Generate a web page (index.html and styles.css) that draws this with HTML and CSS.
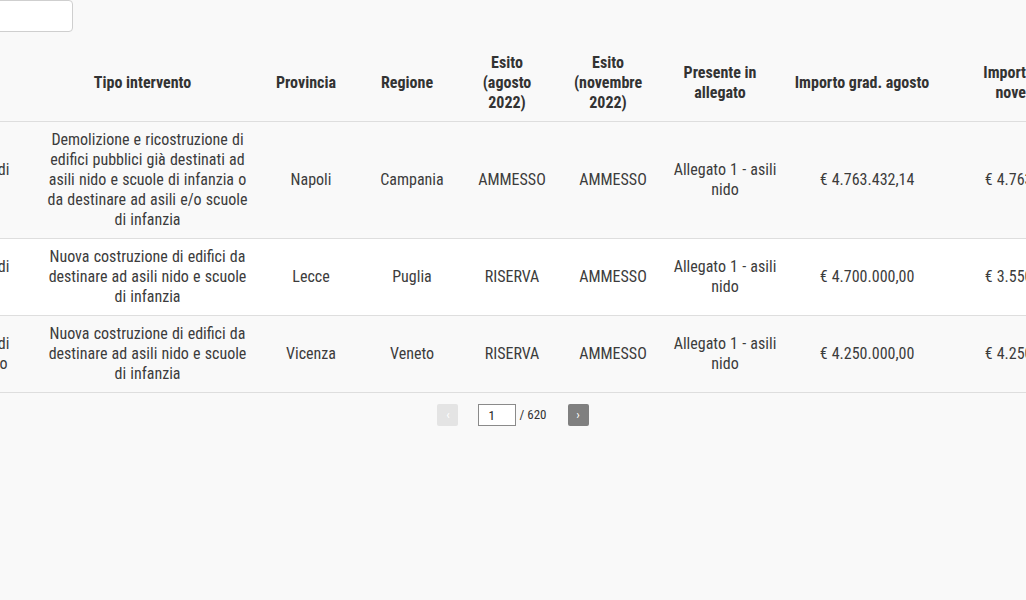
FILE: index.html
```html
<!DOCTYPE html>
<html>
<head>
  <meta charset="UTF-8">
  <link rel="stylesheet" href="styles.css">
  <title>Graduatoria asili nido</title>
</head>
<body>
<div class="scroller">
  <div class="inner">
    <div class="toolbar"><input class="search" type="text"></div>
    <table class="grid">
      <colgroup>
        <col class="c-ente">
        <col class="c-tipo">
        <col class="c-prov">
        <col class="c-reg">
        <col class="c-esito">
        <col class="c-esito2">
        <col class="c-alleg">
        <col class="c-imp">
        <col class="c-imp2">
        <col class="c-last">
      </colgroup>
      <thead>
        <tr>
          <th>Ente</th>
          <th>Tipo intervento</th>
          <th>Provincia</th>
          <th>Regione</th>
          <th>Esito (agosto 2022)</th>
          <th>Esito (novembre 2022)</th>
          <th>Presente in allegato</th>
          <th>Importo grad. agosto</th>
          <th>Importo grad. novembre</th>
          <th>Note</th>
        </tr>
      </thead>
      <tbody>
        <tr class="odd">
          <td>Comune di<br>Napoli</td>
          <td>Demolizione e ricostruzione di edifici pubblici già destinati ad asili nido e scuole di infanzia o da destinare ad asili e/o scuole di infanzia</td>
          <td>Napoli</td>
          <td>Campania</td>
          <td>AMMESSO</td>
          <td>AMMESSO</td>
          <td>Allegato 1 - asili nido</td>
          <td>€ 4.763.432,14</td>
          <td>€ 4.763.432,14</td>
          <td>-</td>
        </tr>
        <tr>
          <td>Comune di<br>Lecce</td>
          <td>Nuova costruzione di edifici da destinare ad asili nido e scuole di infanzia</td>
          <td>Lecce</td>
          <td>Puglia</td>
          <td>RISERVA</td>
          <td>AMMESSO</td>
          <td>Allegato 1 - asili nido</td>
          <td>€ 4.700.000,00</td>
          <td>€ 3.550.000,00</td>
          <td>-</td>
        </tr>
        <tr class="odd">
          <td>Comune di<br>Arzignano</td>
          <td>Nuova costruzione di edifici da destinare ad asili nido e scuole di infanzia</td>
          <td>Vicenza</td>
          <td>Veneto</td>
          <td>RISERVA</td>
          <td>AMMESSO</td>
          <td>Allegato 1 - asili nido</td>
          <td>€ 4.250.000,00</td>
          <td>€ 4.250.000,00</td>
          <td>-</td>
        </tr>
      </tbody>
    </table>
  </div>
</div>

<div class="pager">
  <button class="pg-btn pg-off">‹</button>
  <input class="pg-input" type="text" value="1">
  <span class="pg-total">/ 620</span>
  <button class="pg-btn pg-on">›</button>
</div>
</body>
</html>
```

FILE: styles.css
```css
body {
  margin: 0;
  background-color: #f9f9f9;
  font-family: "Roboto Condensed", "Liberation Sans Narrow", "DejaVu Sans Condensed", Roboto, sans-serif;
  font-size: 16px;
  line-height: 20px;
  color: #3c3c3c;
}

.scroller {
  width: 100%;
  overflow: hidden;
}

.inner {
  margin-left: -85px;
  width: 1322px;
}

.toolbar {
  height: 32px;
  margin-bottom: 13px;
}

.search {
  box-sizing: border-box;
  width: 158px;
  height: 32px;
  margin: 0;
  border: 1px solid #cfcfcf;
  border-radius: 4px;
  background: #fff;
  outline: none;
}

.grid {
  table-layout: fixed;
  width: 1322px;
  border-collapse: collapse;
}

.c-ente { width: 121px; }
.c-tipo { width: 223px; }
.c-prov { width: 104px; }
.c-reg { width: 98px; }
.c-esito { width: 102px; }
.c-esito2 { width: 100px; }
.c-alleg { width: 124px; }
.c-imp { width: 160px; }
.c-imp2 { width: 170px; }
.c-last { width: 120px; }

.grid th {
  padding: 8px 16px 8px 6px;
  font-weight: bold;
  color: #333;
  text-align: center;
  vertical-align: middle;
  border-bottom: 1px solid #dedede;
}

.grid td {
  padding: 8px 9px;
  text-align: center;
  vertical-align: middle;
  border-bottom: 1px solid #dedede;
  background-color: #fff;
  word-spacing: 0.5px;
}

.grid tr.odd td {
  background-color: #f9f9f9;
}

.pager {
  display: flex;
  justify-content: center;
  align-items: center;
  margin-top: 11px;
  font-size: 13px;
  color: #333;
}

.pg-btn {
  width: 21px;
  height: 22px;
  padding: 0;
  border: none;
  border-radius: 2px;
  color: #fff;
  font-size: 13px;
  line-height: 22px;
  font-family: inherit;
}

.pg-off {
  background-color: #e4e4e4;
  margin-right: 20px;
}

.pg-on {
  background-color: #808080;
  margin-left: 21px;
}

.pg-input {
  box-sizing: border-box;
  width: 38px;
  height: 22px;
  margin: 0 3px 0 0;
  padding: 0 9px;
  border: 1px solid #8a8a8a;
  border-radius: 0;
  background: #fff;
  font-family: inherit;
  font-size: 13px;
  color: #222;
}
```
